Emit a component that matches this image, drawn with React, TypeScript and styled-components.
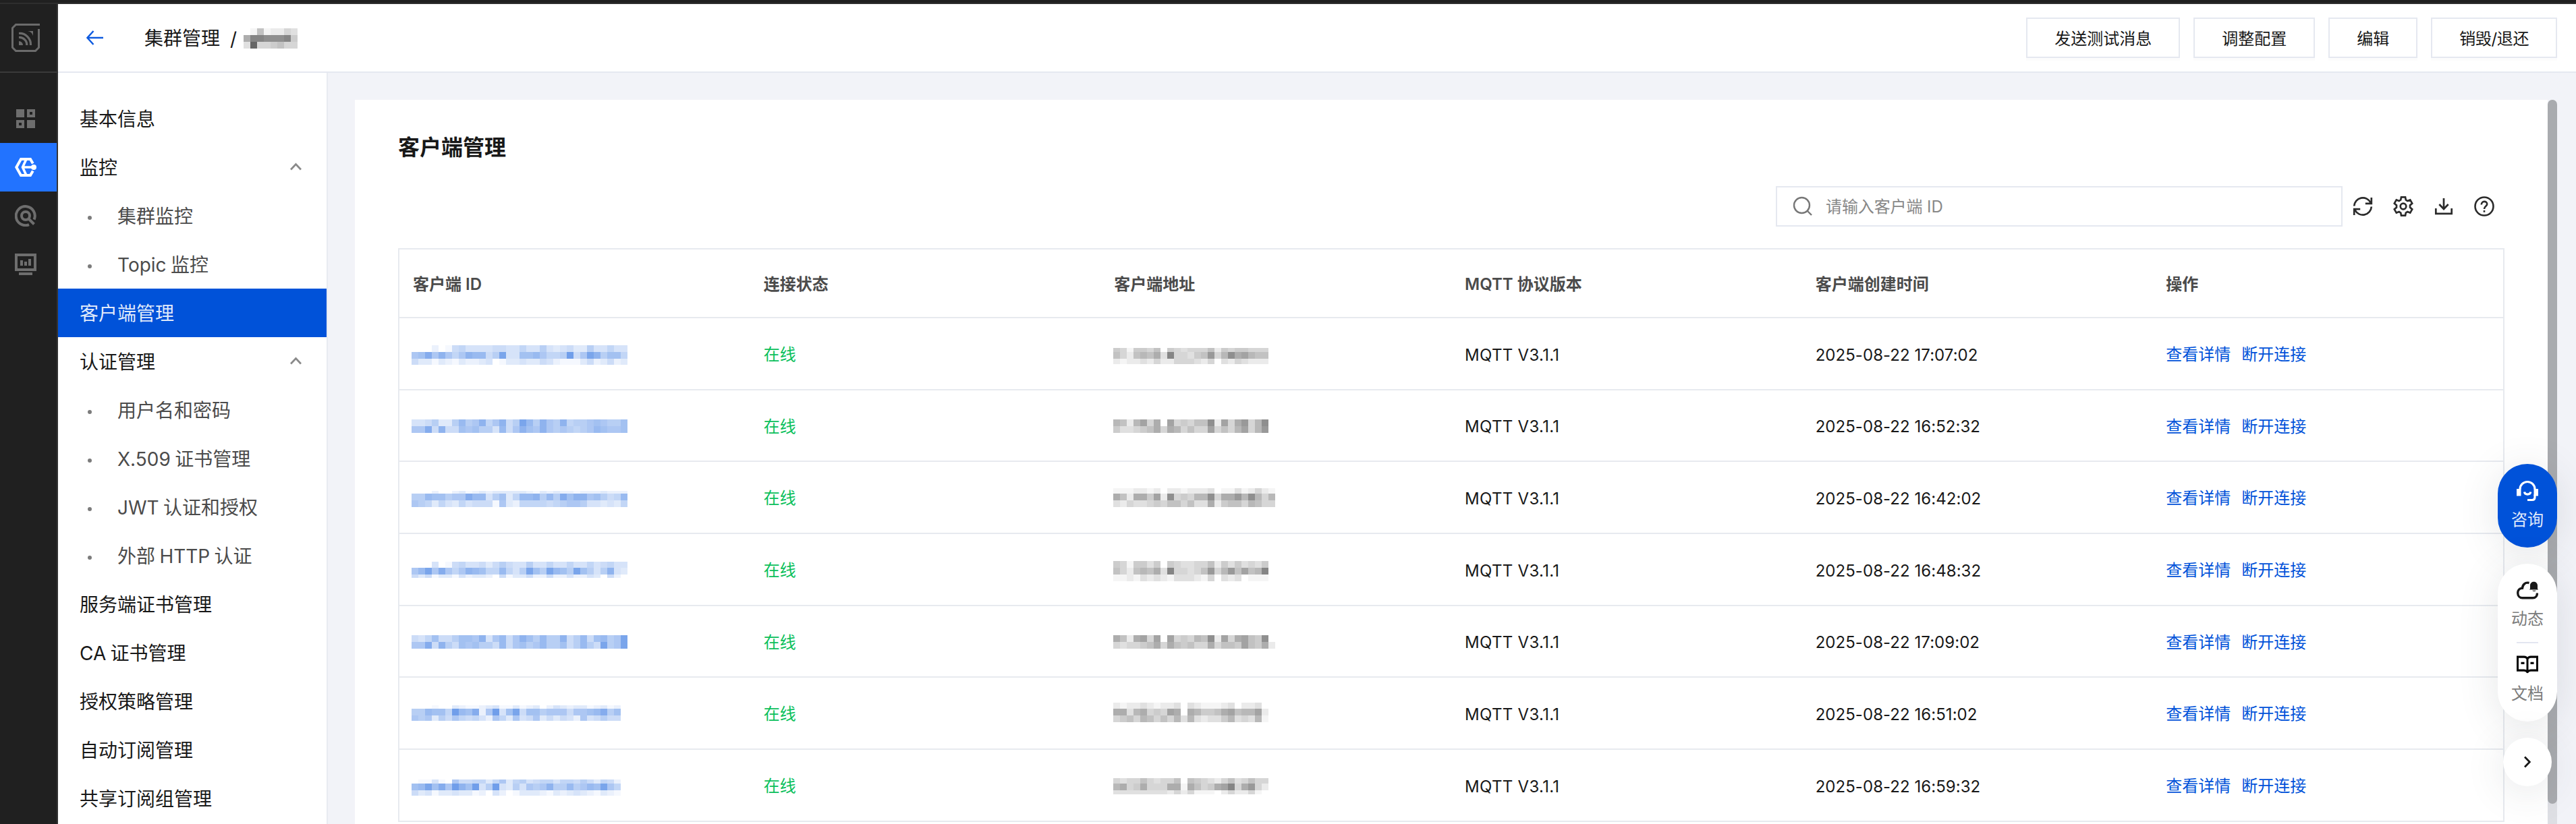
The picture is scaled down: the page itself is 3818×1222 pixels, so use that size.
import React from "react";
import styled, { createGlobalStyle, css } from "styled-components";

const line = "#e7eaef";

const GlobalStyle = createGlobalStyle`
  * { box-sizing: border-box; }
  body {
    margin: 0;
    background: #f2f3f8;
    color: #181818;
    font-family: Inter, "Noto Sans CJK SC", sans-serif;
    font-size: 24px;
    overflow: hidden;
  }
  svg { display: block; flex: none; }
`;

const Page = styled.div`
  display: flex;
  flex-direction: column;
  height: 100vh;
  overflow: hidden;
`;

const TopStrip = styled.div`
  flex: none;
  height: 6px;
  background: #202020;
  border-bottom: 2px solid #2e2e2e;
`;

const Shell = styled.div`
  display: flex;
  flex: 1;
  min-height: 0;
`;

const Rail = styled.nav`
  flex: none;
  width: 86px;
  background: #202020;
  border-right: 2px solid #343434;
`;

const RailLogo = styled.div`
  height: 102px;
  padding: 29px 0 0 17px;
  border-bottom: 2px solid #3a3a3a;
  margin-bottom: 32px;
`;

const RailItem = styled.div<{ $active?: boolean }>`
  display: flex;
  align-items: center;
  height: 72px;
  padding-left: 22px;
  background: ${(p) => (p.$active ? "#2273ff" : "transparent")};
`;

const Main = styled.div`
  display: flex;
  flex-direction: column;
  flex: 1;
  min-width: 0;
`;

const Header = styled.header`
  display: flex;
  align-items: center;
  flex: none;
  height: 102px;
  padding: 0 28px 0 42px;
  background: #fff;
  border-bottom: 2px solid #e5e8f0;
`;

const Crumbs = styled.div`
  display: flex;
  align-items: center;
  margin-left: 61px;
  font-size: 28px;
  flex: 1;
`;

const Crumb = styled.span`
  margin-bottom: 2px;
`;

const Slash = styled.span`
  margin: 3px 10px 0 15px;
`;

const CrumbMosaic = styled.span`
  margin-top: 2px;
`;

const HeaderActions = styled.div`
  display: flex;
  gap: 20px;
`;

const Button = styled.button<{ $tight?: boolean }>`
  height: 60px;
  padding: 0 40px 2px;
  border: 2px solid #e5e8f0;
  background: #fff;
  box-shadow: 0 4px 0 rgba(0, 0, 0, 0.012);
  color: #181818;
  font: inherit;
  letter-spacing: ${(p) => (p.$tight ? "-0.4px" : "0")};
  white-space: nowrap;
`;

const Body = styled.div`
  display: flex;
  flex: 1;
  min-height: 0;
`;

const Sidebar = styled.aside`
  flex: none;
  width: 400px;
  padding-top: 32px;
  background: #fff;
  border-right: 2px solid #e8ebf1;
  overflow: hidden;
`;

const MenuItem = styled.div<{ $active?: boolean; $sub?: boolean }>`
  display: flex;
  align-items: center;
  justify-content: space-between;
  height: 72px;
  padding: 0 37px 2px 32px;
  font-size: 28px;
  word-spacing: -1.5px;
  white-space: nowrap;
  ${(p) => p.$active && css`
    background: #0052d9;
    color: rgba(255, 255, 255, 0.9);
  `}
  ${(p) => p.$sub && css`
    justify-content: flex-start;
    color: #4b4b4b;
  `}
`;

const Dot = styled.i`
  width: 6px;
  height: 6px;
  margin: 8px 38px 0 12px;
  border-radius: 50%;
  background: #7c7c7c;
`;

const Content = styled.main`
  display: flex;
  flex: 1;
  min-width: 0;
  padding: 40px 28px 0 40px;
`;

const Card = styled.section`
  flex: 1;
  min-width: 0;
  padding: 47px 64px 0;
  background: #fff;
  overflow: hidden;
`;

const CardTitle = styled.h1`
  margin: 0;
  height: 48px;
  line-height: 48px;
  font-size: 32px;
  font-weight: 700;
`;

const Toolbar = styled.div`
  display: flex;
  justify-content: flex-end;
  align-items: center;
  height: 60px;
  margin: 33px 15px 32px 0;
`;

const Search = styled.label`
  display: flex;
  align-items: center;
  width: 840px;
  height: 60px;
  margin-right: 15px;
  padding-left: 22px;
  border: 2px solid #e5e8f0;
  color: #888;
`;

const SearchInput = styled.input`
  flex: 1;
  margin-left: 18px;
  padding: 0;
  border: 0;
  outline: 0;
  font: inherit;
  letter-spacing: -0.1px;
  &::placeholder { color: #888; opacity: 1; }
`;

const ToolIcons = styled.div`
  display: flex;
  gap: 30px;
`;

const Table = styled.div`
  border: 2px solid ${line};
  border-bottom: 0;
`;

const Row = styled.div<{ $h: number }>`
  display: grid;
  grid-template-columns: repeat(6, 1fr);
  height: ${(p) => p.$h}px;
  border-bottom: 2px solid ${line};
`;

const HeadRow = styled(Row)`
  color: #4b4b4b;
  font-weight: 600;
`;

const Cell = styled.div<{ $green?: boolean; $spacing?: number }>`
  display: flex;
  align-items: center;
  padding: ${(p) => (p.$spacing === undefined ? "0 0 2px 20px" : "3px 0 0 20px")};
  gap: 16px;
  white-space: nowrap;
  color: ${(p) => (p.$green ? "#0abf5b" : "inherit")};
  letter-spacing: ${(p) => p.$spacing ?? 0}px;
`;

const MosaicCell = styled.div<{ $inset: number }>`
  padding-left: ${(p) => p.$inset}px;
`;

const Link = styled.a`
  color: #0052d9;
`;

const ScrollTrack = styled.div`
  flex: none;
  width: 14px;
  background: #dedfe4;
  border-radius: 7px 7px 0 0;
`;

const ScrollThumb = styled.div`
  height: 1044px;
  border-radius: 7px;
  background: #a9abaf;
`;

const FloatDock = styled.div`
  position: absolute;
  top: 688px;
  right: 28px;
  display: flex;
  flex-direction: column;
  align-items: center;
  width: 88px;
  gap: 24px;
`;

const floatShadow = css`
  box-shadow: 0 8px 60px rgba(55, 60, 70, 0.13);
`;

const Pill = styled.div<{ $blue?: boolean }>`
  width: 88px;
  height: ${(p) => (p.$blue ? 124 : 234)}px;
  border-radius: 44px;
  background: ${(p) => (p.$blue ? "#0052d9" : "#fff")};
  color: ${(p) => (p.$blue ? "rgba(255,255,255,.9)" : "#7c7c7c")};
  display: flex;
  flex-direction: column;
  align-items: center;
  padding-top: 24px;
  ${floatShadow}
`;

const PillText = styled.span<{ $gap: number }>`
  height: 30px;
  line-height: 30px;
  margin-top: ${(p) => p.$gap}px;
`;

const PillRule = styled.hr`
  flex: none;
  width: 32px;
  height: 2px;
  margin: 19px 0 18px;
  border: 0;
  background: #e3e6f0;
`;

const Collapse = styled.div`
  display: flex;
  align-items: center;
  justify-content: center;
  width: 72px;
  height: 72px;
  border-radius: 50%;
  background: #fff;
  ${floatShadow}
`;

/* One band of censor blocks: [y, height, one hex level per 10px block]. */
type Band = [number, number, string];

const Mosaic = ({ bands, color, height = 104 }: { bands: Band[]; color: string; height?: number }) => (
  <svg width={10 * Math.max(...bands.map((b) => b[2].length))} height={height} shapeRendering="crispEdges">
    {bands.map(([y, h, levels]) =>
      levels.split("").map((c, i) => (
        <rect key={`${y}-${i}`} x={i * 10} y={y} width={10} height={h} fill={color} fillOpacity={parseInt(c, 16) * 0.04} />
      ))
    )}
  </svg>
);

interface Client {
  time: string;
  height: number;
  id: Band[];
  addr: Band[];
}

const clients: Client[] = [
  {
    time: "2025-08-22 17:07:02", height: 107,
    id: [[40, 10, "00020156444455446447434533744644"], [50, 10, "89c8b868baa57d4499a8667e58db7996"], [60, 9, "53313213223401334335421113523523"]],
    addr: [[44, 6, "54155460543444625455444"], [50, 10, "64267683c44356a47b89766"], [60, 8, "21223242244432403243222"]],
  },
  {
    time: "2025-08-22 16:52:32", height: 106,
    id: [[43, 10, "4457337a78b68b57da7b87b677898779"], [53, 10, "88c5b55989774a58b98b8787678a9889"]],
    addr: [[43, 10, "76279480945466b2948a47b"], [53, 10, "5334568487464494647947a"]],
  },
  {
    time: "2025-08-22 16:42:02", height: 107,
    id: [[43, 4, "00020023123233333213232212223222"], [47, 10, "77a99788caa47936aab7a7c9bb89756a"], [57, 10, "87636436455518326666567887443436"]],
    addr: [[39, 8, "111221202212223011312421"], [47, 10, "86288592b45477b488a7b747"], [57, 10, "324334546646338256647644"]],
  },
  {
    time: "2025-08-22 16:48:32", height: 107,
    id: [[41, 9, "00040156445357544744644644645644"], [50, 10, "8ad8c868ba966a647d97da97d9747b43"], [60, 5, "53513314233205133522522422430520"]],
    addr: [[40, 10, "54155350543344625353435"], [50, 10, "64267683c44346a47a6967c"], [60, 10, "11213232133321403230111"]],
  },
  {
    time: "2025-08-22 17:09:02", height: 106,
    id: [[43, 10, "5469557998b48a58b97a77b57a59a78d"], [53, 10, "88c5b75989775a58978a77957a75d78d"]],
    addr: [[43, 10, "86289490945476b2948965b0"], [53, 10, "434456848656448466596582"]],
  },
  {
    time: "2025-08-22 16:51:02", height: 107,
    id: [[41, 5, "0001003211234113123024323312312"], [46, 10, "77a996ea9c28e49d59978885889ac79"], [56, 8, "8783758656428638458353542845755"]],
    addr: [[37, 9, "21223212230321112302230"], [46, 10, "88378454980875568967792"], [56, 10, "45647646473732335734371"]],
  },
  {
    time: "2025-08-22 16:59:32", height: 107,
    id: [[44, 6, "0114108556636836745664665753652"], [50, 10, "9ad9c8eb9e47e4374878b77a78a9d86"], [60, 8, "5341334331204201333213234321321"]],
    addr: [[42, 8, "43446434460654324634644"], [50, 10, "78458444881864589c48a42"], [60, 6, "33333333242411102422410"]],
  },
];

const menu: { label: string; kind?: "group" | "sub" | "active" }[] = [
  { label: "基本信息" },
  { label: "监控", kind: "group" },
  { label: "集群监控", kind: "sub" },
  { label: "Topic 监控", kind: "sub" },
  { label: "客户端管理", kind: "active" },
  { label: "认证管理", kind: "group" },
  { label: "用户名和密码", kind: "sub" },
  { label: "X.509 证书管理", kind: "sub" },
  { label: "JWT 认证和授权", kind: "sub" },
  { label: "外部 HTTP 认证", kind: "sub" },
  { label: "服务端证书管理" },
  { label: "CA 证书管理" },
  { label: "授权策略管理" },
  { label: "自动订阅管理" },
  { label: "共享订阅组管理" },
];

const columns = ["客户端 ID", "连接状态", "客户端地址", "MQTT 协议版本", "客户端创建时间", "操作"];

const LogoIcon = () => (
  <svg width="42" height="42" viewBox="0 0 42 42" fill="none" stroke="#6b6b6b">
    <path d="M42 1.5H6.5L1.5 6.5V35.5L6.5 40.500H35.500L40.500 35.500V8" strokeWidth="3" />
    <path d="M11 14.500A16.500 16.500 0 0 1 28.500 32" strokeWidth="3.200" />
    <path d="M11 20.500A11 11 0 0 1 22.800 32" strokeWidth="3.200" />
    <path d="M11 26a6 6 0 0 1 6 6h-6zM24 11h8v7a10 10 0 0 0-8-7z" fill="#6b6b6b" stroke="none" />
  </svg>
);

const GridIcon = () => (
  <svg width="32" height="28" viewBox="0 0 32 28" fill="#6e6e6e">
    <path d="M2 0h12v12H2zM18 16h12v12H18z" />
    <path fillRule="evenodd" d="M18 0h12v12H18zm4 4v4h4V4zM2 16h12v12H2zm4 4v4h4v-4z" />
  </svg>
);

const HexIcon = () => (
  <svg width="32" height="28" viewBox="0 0 32 28" fill="none" stroke="#fff" strokeWidth="4">
    <path d="M26.800 8.500L23 2H9L2.300 14L9 26h14l3.800-6.500" />
    <path d="M17 2L11.500 14L17 26M11.500 14H26" strokeWidth="3.600" />
    <circle cx="28" cy="14" r="4" fill="#fff" stroke="none" />
  </svg>
);

const InspectIcon = () => (
  <svg width="32" height="32" viewBox="0 0 32 32" fill="none" stroke="#6e6e6e" strokeWidth="4">
    <path d="M28.600 21.600A14 14 0 1 0 21 29.100" />
    <circle cx="16" cy="16" r="6" />
    <path d="M19.500 19.500L28.500 28.500" />
  </svg>
);

const MonitorIcon = () => (
  <svg width="32" height="32" viewBox="0 0 32 32" fill="#6e6e6e">
    <path fillRule="evenodd" d="M0 0h32v26H0zm4 4v18h24V4z" />
    <path d="M8 10h4v8H8zM14 12h4v6h-4zM20 8h4v10h-4zM6 28h20v4H6z" />
  </svg>
);

const BackIcon = () => (
  <svg width="25" height="22" viewBox="0 0 25 22" fill="none" stroke="#0f5bdf" strokeWidth="2.500">
    <path d="M10.500 1L1.500 11l9 10M1.500 11H25" />
  </svg>
);

const ChevronUp = () => (
  <svg width="17" height="12" viewBox="0 0 17 12" fill="none" stroke="#8a8a8a" strokeWidth="2.800">
    <path d="M1 10.500L8.500 2.500l7.500 8" />
  </svg>
);

const SearchIcon = () => (
  <svg width="32" height="32" viewBox="0 0 32 32" fill="none" stroke="#777" strokeWidth="2.400">
    <circle cx="14.500" cy="14.500" r="11.500" />
    <path d="M23 23l6 6" />
  </svg>
);

const RefreshIcon = () => (
  <svg width="30" height="30" viewBox="0 0 30 30" fill="none" stroke="#2b2b2b" strokeWidth="2.700">
    <path d="M2.200 14.500A12.800 12.800 0 0 1 26.500 9.500M27.800 2v8.800h-9" />
    <path d="M27.800 15.500A12.800 12.800 0 0 1 3.500 20.500M2.200 28v-8.800h9" />
  </svg>
);

const GearIcon = () => (
  <svg width="30" height="30" viewBox="0 0 30 30" fill="none" stroke="#2b2b2b" strokeWidth="2.700">
    <path d="M12 1.300h6l.8 4.200 2.400 1.400 4-1.500 3 5.200-3.200 2.800v3.200l3.200 2.800-3 5.200-4-1.500-2.400 1.400-.8 4.200h-6l-.8-4.200-2.400-1.400-4 1.500-3-5.200L5 16.600v-3.200l-3.200-2.800 3-5.200 4 1.500 2.400-1.400z" />
    <circle cx="15" cy="15" r="4.300" />
  </svg>
);

const DownloadIcon = () => (
  <svg width="30" height="30" viewBox="0 0 30 30" fill="none" stroke="#2b2b2b" strokeWidth="2.700">
    <path d="M15 3v15.500M8.300 12l6.700 7 6.700-7M3.300 18v7.800h23.400V18" />
  </svg>
);

const HelpIcon = () => (
  <svg width="30" height="30" viewBox="0 0 30 30" fill="none" stroke="#2b2b2b" strokeWidth="2.600">
    <circle cx="15" cy="15" r="13.500" />
    <path d="M10.800 12.500C10.800 6.500 19.200 6.500 19.200 11.800C19.200 14.800 15 14.800 15 19M15 21v2.800" />
  </svg>
);

const HeadsetIcon = () => (
  <svg width="32" height="32" viewBox="0 0 32 32" fill="none" stroke="#fff" strokeWidth="3.200">
    <path d="M5 13.500a11 11 0 0 1 22 0" />
    <path d="M27 21.500v4q0 4-4 4h-7M11.500 17.500a4.700 4.200 0 0 0 9.300 0" />
    <path d="M0 13h6.500v10.500H0zM25.500 13H32v10.500h-6.500z" fill="#fff" stroke="none" />
  </svg>
);

const CloudBellIcon = () => (
  <svg width="32" height="30" viewBox="0 0 32 30" fill="none" stroke="#181818" strokeWidth="3.400">
    <path d="M18.500 4.500C13 3 8.800 7 8.500 12.200C4 12.300 1.700 15.600 1.700 19.200C1.700 23.600 4.500 26.800 8.500 26.800H24C28.300 26.800 30.500 23.500 30.500 19.500" />
    <path d="M20 13V8.500c0-7.600 11-7.600 11 0V13l1 1.500H19zM23 15.700h6q-3 2.400-6 0z" fill="#181818" stroke="none" />
  </svg>
);

const BookIcon = () => (
  <svg width="32" height="27" viewBox="0 0 32 25" preserveAspectRatio="none" fill="none" stroke="#050505" strokeWidth="3">
    <path d="M16 22.500C14.500 21 13 20.500 11 20.500H1.500V2H11c2.500 0 4 1 5 3c1-2 2.500-3 5-3h9.500v18.500H21c-2 0-3.500.5-5 2zM16 4v20" />
    <path d="M6.500 10.500h5M20.500 10.500h5" />
  </svg>
);

const ChevronRight = () => (
  <svg width="10" height="18" viewBox="0 0 10 18" fill="none" stroke="#181818" strokeWidth="2.800">
    <path d="M1 1.500L8.300 9L1 16.500" />
  </svg>
);

export default function App() {
  return (
    <>
      <GlobalStyle />
      <Page>
        <TopStrip />
        <Shell>
          <Rail>
            <RailLogo><LogoIcon /></RailLogo>
            <RailItem><GridIcon /></RailItem>
            <RailItem $active><HexIcon /></RailItem>
            <RailItem><InspectIcon /></RailItem>
            <RailItem><MonitorIcon /></RailItem>
          </Rail>
          <Main>
            <Header>
              <BackIcon />
              <Crumbs>
                <Crumb>集群管理</Crumb>
                <Slash>/</Slash>
                <CrumbMosaic>
                  <Mosaic color="#000" height={30} bands={[[0, 10, "01612243"], [10, 10, "8ccbbbc5"], [20, 10, "3f445644"]]} />
                </CrumbMosaic>
              </Crumbs>
              <HeaderActions>
                <Button>发送测试消息</Button>
                <Button>调整配置</Button>
                <Button>编辑</Button>
                <Button $tight>销毁/退还</Button>
              </HeaderActions>
            </Header>
            <Body>
              <Sidebar>
                {menu.map(({ label, kind }) => (
                  <MenuItem key={label} $active={kind === "active"} $sub={kind === "sub"}>
                    {kind === "sub" && <Dot />}
                    {label}
                    {kind === "group" && <ChevronUp />}
                  </MenuItem>
                ))}
              </Sidebar>
              <Content>
                <Card>
                  <CardTitle>客户端管理</CardTitle>
                  <Toolbar>
                    <Search>
                      <SearchIcon />
                      <SearchInput placeholder="请输入客户端 ID" />
                    </Search>
                    <ToolIcons>
                      <RefreshIcon />
                      <GearIcon />
                      <DownloadIcon />
                      <HelpIcon />
                    </ToolIcons>
                  </Toolbar>
                  <Table>
                    <HeadRow $h={102}>
                      {columns.map((c) => <Cell key={c}>{c}</Cell>)}
                    </HeadRow>
                    {clients.map((c) => (
                      <Row key={c.time} $h={c.height}>
                        <MosaicCell $inset={18}><Mosaic color="#0052d9" bands={c.id} /></MosaicCell>
                        <Cell $green>在线</Cell>
                        <MosaicCell $inset={19}><Mosaic color="#000" bands={c.addr} /></MosaicCell>
                        <Cell $spacing={0.3}>MQTT V3.1.1</Cell>
                        <Cell $spacing={0.05}>{c.time}</Cell>
                        <Cell>
                          <Link>查看详情</Link>
                          <Link>断开连接</Link>
                        </Cell>
                      </Row>
                    ))}
                  </Table>
                </Card>
                <ScrollTrack><ScrollThumb /></ScrollTrack>
              </Content>
            </Body>
          </Main>
        </Shell>
        <FloatDock>
          <Pill $blue>
            <HeadsetIcon />
            <PillText $gap={12}>咨询</PillText>
          </Pill>
          <Pill>
            <CloudBellIcon />
            <PillText $gap={13}>动态</PillText>
            <PillRule />
            <BookIcon />
            <PillText $gap={15}>文档</PillText>
          </Pill>
          <Collapse><ChevronRight /></Collapse>
        </FloatDock>
      </Page>
    </>
  );
}
